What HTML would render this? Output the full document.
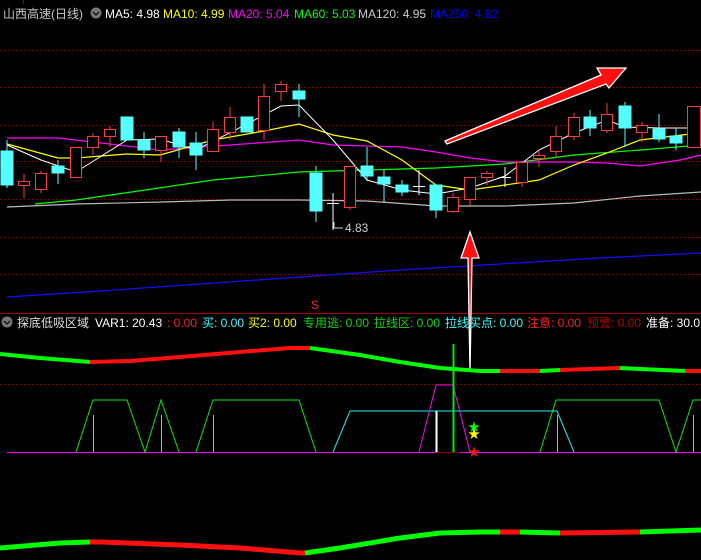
<!DOCTYPE html>
<html><head><meta charset="utf-8"><style>
html,body{margin:0;padding:0;background:#000;width:701px;height:560px;overflow:hidden}
svg text{font-family:"Liberation Sans","Noto Sans CJK SC",sans-serif;font-size:12px}
</style></head><body>
<svg width="701" height="560" xmlns="http://www.w3.org/2000/svg">
<rect width="701" height="560" fill="#000"/>
<g stroke="#a00000" stroke-dasharray="1,3" stroke-width="1">
<line x1="0" y1="50.5" x2="701" y2="50.5"/><line x1="0" y1="87.5" x2="701" y2="87.5"/>
<line x1="0" y1="125.5" x2="701" y2="125.5"/><line x1="0" y1="161.5" x2="701" y2="161.5"/>
<line x1="0" y1="199.5" x2="701" y2="199.5"/><line x1="0" y1="237.5" x2="701" y2="237.5"/>
<line x1="0" y1="274.5" x2="701" y2="274.5"/><line x1="0" y1="384.5" x2="701" y2="384.5"/>
</g>
<line x1="0" y1="313.5" x2="701" y2="313.5" stroke="#a00000"/>
<line x1="23.5" y1="0" x2="23.5" y2="4" stroke="#a00000"/>
<text x="3" y="18" fill="#c8c8c8">山西高速(日线)</text>
<circle cx="96" cy="13" r="5.5" fill="#777"/><path d="M93 12 L96 15 L99 12" stroke="#111" stroke-width="1.3" fill="none"/>
<text x="105" y="18" fill="#fff">MA5: 4.98</text>
<text x="163" y="18" fill="#ff0">MA10: 4.99</text>
<text x="228" y="18" fill="#f0f">MA20: 5.04</text>
<text x="294" y="18" fill="#0f0">MA60: 5.03</text>
<text x="358" y="18" fill="#ccc">MA120: 4.95</text>
<text x="430" y="18" fill="#00f">MA250: 4.82</text>
<polyline fill="none" stroke="#1010ff" stroke-width="1.2" points="7,297 100,291 200,284 300,277 400,270 500,264 600,258 701,253"/>
<polyline fill="none" stroke="#bbb" stroke-width="1.2" points="7,207 76,204 162,202 230,200 299,200 367,201 436,206 505,206 574,203 640,196 701,192"/>
<polyline fill="none" stroke="#0f0" stroke-width="1.2" points="35,204 76,200 145,190 213,180 299,172 367,170 436,168 505,164 574,155 640,150 701,145"/>
<polyline fill="none" stroke="#f0f" stroke-width="1.2" points="7,138 58,138 93,142 160,150 230,145 299,140 333,145 402,147 436,152 470,158 505,162 539,162 574,162 607,163 640,166 680,160 701,155"/>
<polyline fill="none" stroke="#ff0" stroke-width="1.2" points="7,144 58,158 76,158 127,154 160,155 213,140 264,131 299,124 333,135 367,141 402,160 436,185 470,190 505,185 539,180 574,165 607,153 640,140 690,134 701,126"/>
<polyline fill="none" stroke="#fff" stroke-width="1" points="7,145 41,160 76,172 127,140 160,139 196,150 247,124 281,106 299,105 333,140 367,180 402,190 436,194 470,188 505,176 539,150 574,133 607,120 625,127 660,128 690,128 701,125"/>
<g stroke-width="1">
<g fill="#55ffff" stroke="#55ffff">
<line x1="7" y1="140" x2="7" y2="188"/><rect x="1" y="151" width="12" height="34"/>
<line x1="58" y1="160" x2="58" y2="184"/><rect x="52" y="166" width="12" height="7"/>
<line x1="127" y1="117" x2="127" y2="140"/><rect x="121" y="117" width="12" height="23"/>
<line x1="144" y1="132" x2="144" y2="158"/><rect x="138" y="140" width="12" height="10"/>
<line x1="179" y1="128" x2="179" y2="158"/><rect x="173" y="132" width="12" height="15"/>
<line x1="196" y1="132" x2="196" y2="170"/><rect x="190" y="143" width="12" height="12"/>
<line x1="247" y1="117" x2="247" y2="132"/><rect x="241" y="117" width="12" height="15"/>
<line x1="299" y1="84" x2="299" y2="117"/><rect x="293" y="91" width="12" height="8"/>
<line x1="316" y1="166" x2="316" y2="222"/><rect x="310" y="173" width="12" height="38"/>
<line x1="367" y1="147" x2="367" y2="181"/><rect x="361" y="166" width="12" height="10"/>
<line x1="384" y1="170" x2="384" y2="202"/><rect x="378" y="177" width="12" height="7"/>
<line x1="402" y1="180" x2="402" y2="196"/><rect x="396" y="185" width="12" height="7"/>
<line x1="436" y1="185" x2="436" y2="218"/><rect x="430" y="185" width="12" height="25"/>
<line x1="590" y1="110" x2="590" y2="136"/><rect x="584" y="117" width="12" height="11"/>
<line x1="625" y1="102" x2="625" y2="147"/><rect x="619" y="106" width="12" height="22"/>
<line x1="659" y1="114" x2="659" y2="142"/><rect x="653" y="129" width="12" height="10"/>
<line x1="676" y1="128" x2="676" y2="150"/><rect x="670" y="136" width="12" height="7"/>
</g>
<g fill="#000" stroke="#ff3b3b">
<line x1="24" y1="174" x2="24" y2="198"/><rect x="18.5" y="181.5" width="11" height="4"/>
<line x1="41" y1="171" x2="41" y2="193"/><rect x="35.5" y="173.5" width="11" height="16"/>
<rect x="70.5" y="147.5" width="11" height="30"/>
<line x1="93" y1="133" x2="93" y2="155"/><rect x="87.5" y="136.5" width="11" height="11"/>
<line x1="110" y1="126" x2="110" y2="147"/><rect x="104.5" y="129.5" width="11" height="7"/>
<line x1="161" y1="136" x2="161" y2="162"/><rect x="155.5" y="136.5" width="11" height="14"/>
<line x1="213" y1="122" x2="213" y2="152"/><rect x="207.5" y="129.5" width="11" height="22"/>
<line x1="230" y1="107" x2="230" y2="140"/><rect x="224.5" y="117.5" width="11" height="15"/>
<line x1="264" y1="84" x2="264" y2="140"/><rect x="258.5" y="96.5" width="11" height="34"/>
<line x1="281" y1="81" x2="281" y2="101"/><rect x="275.5" y="84.5" width="11" height="7"/>
<line x1="350" y1="166" x2="350" y2="210"/><rect x="344.5" y="166.5" width="11" height="41"/>
<line x1="453" y1="193" x2="453" y2="213"/><rect x="447.5" y="197.5" width="11" height="14"/>
<line x1="470" y1="177" x2="470" y2="206"/><rect x="464.5" y="177.5" width="11" height="22"/>
<line x1="487" y1="171" x2="487" y2="185"/><rect x="481.5" y="173.5" width="11" height="4"/>
<line x1="522" y1="162" x2="522" y2="187"/><rect x="516.5" y="162.5" width="11" height="20"/>
<line x1="539" y1="150" x2="539" y2="167"/><rect x="533.5" y="155.5" width="11" height="3"/>
<line x1="556" y1="126" x2="556" y2="157"/><rect x="550.5" y="136.5" width="11" height="15"/>
<line x1="574" y1="113" x2="574" y2="140"/><rect x="568.5" y="117.5" width="11" height="19"/>
<line x1="607" y1="103" x2="607" y2="133"/><rect x="601.5" y="114.5" width="11" height="16"/>
<line x1="642" y1="122" x2="642" y2="142"/><rect x="636.5" y="125.5" width="11" height="7"/>
<rect x="687.5" y="106.5" width="13" height="41"/>
</g>
<g stroke="#fff">
<line x1="333" y1="193" x2="333" y2="230"/><line x1="327" y1="203.5" x2="339" y2="203.5"/>
<line x1="419" y1="170" x2="419" y2="195"/><line x1="413" y1="186.5" x2="425" y2="186.5"/>
<line x1="505" y1="167" x2="505" y2="187"/><line x1="499" y1="177.5" x2="511" y2="177.5"/>
</g>
</g>
<path d="M334 222 L334 228 L343 228" stroke="#ccc" fill="none"/>
<text x="345" y="232" fill="#ccc" font-size="11">4.83</text>
<polygon points="445,141 601,75 597,68 626,68 609,88 606,84 447,144" fill="#ff1010" stroke="#fff" stroke-width="1.3"/>
<polygon points="470,372 468,258 461,258 470,232 479,258 472,258" fill="#ff1010" stroke="#fff" stroke-width="1.3"/>
<text x="311" y="309" fill="#ff2020" font-size="11">S</text>
<circle cx="7" cy="322" r="5.5" fill="#777"/><path d="M4 321 L7 324 L10 321" stroke="#111" stroke-width="1.3" fill="none"/>
<g font-size="12.5">
<text x="17" y="327" fill="#ddd" font-size="12.5">探底低吸区域</text>
<text x="95" y="327" fill="#fff" font-size="12.5">VAR1: 20.43</text>
<text x="167" y="327" fill="#ff2020" font-size="12.5">: 0.00</text>
<text x="202" y="327" fill="#3ff" font-size="12.5">买: 0.00</text>
<text x="248" y="327" fill="#ff0" font-size="12.5">买2: 0.00</text>
<text x="303" y="327" fill="#0d0" font-size="12.5">专用逃: 0.00</text>
<text x="374" y="327" fill="#0d0" font-size="12.5">拉线区: 0.00</text>
<text x="445" y="327" fill="#3ff" font-size="12.5">拉线买点: 0.00</text>
<text x="527" y="327" fill="#ff2020" font-size="12.5">注意: 0.00</text>
<text x="587" y="327" fill="#b00000" font-size="12.5">预警: 0.00</text>
<text x="646" y="327" fill="#fff" font-size="12.5">准备: 30.0</text>
</g>
<g fill="none" stroke-width="4">
<polyline stroke="#0f0" points="0,354 40,358 90,362"/>
<polyline stroke="#ff1010" points="90,362 130,361 180,357 240,352 290,348 310,348"/>
<polyline stroke="#0f0" points="310,348 360,355 400,362 440,368 480,371 500,371"/>
<polyline stroke="#ff1010" points="500,371 540,371"/>
<polyline stroke="#0f0" points="540,371 560,370"/>
<polyline stroke="#ff1010" points="560,370 620,368"/>
<polyline stroke="#0f0" points="620,368 685,371"/>
<polyline stroke="#ff1010" points="685,371 701,371"/>
</g>
<g fill="none" stroke-width="5">
<polyline stroke="#0f0" points="0,548 60,543 90,542"/>
<polyline stroke="#ff1010" points="90,542 100,542 180,545 240,548 300,553 305,553"/>
<polyline stroke="#0f0" points="305,553 340,548 400,538 440,533 480,532 500,532"/>
<polyline stroke="#ff1010" points="500,532 520,532"/>
<polyline stroke="#0f0" points="520,532 560,533"/>
<polyline stroke="#ff1010" points="560,533 640,532"/>
<polyline stroke="#0f0" points="640,532 701,530"/>
</g>
<line x1="7" y1="452.5" x2="701" y2="452.5" stroke="#f0f"/>
<line x1="436" y1="452.5" x2="460" y2="452.5" stroke="#800000"/>
<g fill="none" stroke="#0e0" stroke-width="1">
<polyline points="76,452 93,400 127,400 145,452 161,400 179,452"/>
<polyline points="196,452 213,400 299,400 316,452"/>
<polyline points="540,452 556,400 659,400 676,452 693,400 701,400"/>
</g>
<polyline fill="none" stroke="#2ee" points="333,452 350,411 557,411 574,452"/>
<g stroke="#2ee"><line x1="93.5" y1="415" x2="93.5" y2="452"/><line x1="161.5" y1="415" x2="161.5" y2="452"/><line x1="213.5" y1="415" x2="213.5" y2="452"/><line x1="557.5" y1="415" x2="557.5" y2="452"/><line x1="693.5" y1="415" x2="693.5" y2="452"/></g>
<polyline fill="none" stroke="#f0f" points="419,452 436,385 453,385 470,452"/>
<line x1="436.5" y1="411" x2="436.5" y2="452" stroke="#fff" stroke-width="2"/>
<line x1="453.5" y1="344" x2="453.5" y2="452" stroke="#0e0" stroke-width="2"/>
<text x="468" y="431" fill="#0f0" font-size="14">★</text>
<text x="468" y="438" fill="#ff0" font-size="14">★</text>
<text x="468" y="456" fill="#ff1010" font-size="14">★</text>
</svg>
</body></html>
